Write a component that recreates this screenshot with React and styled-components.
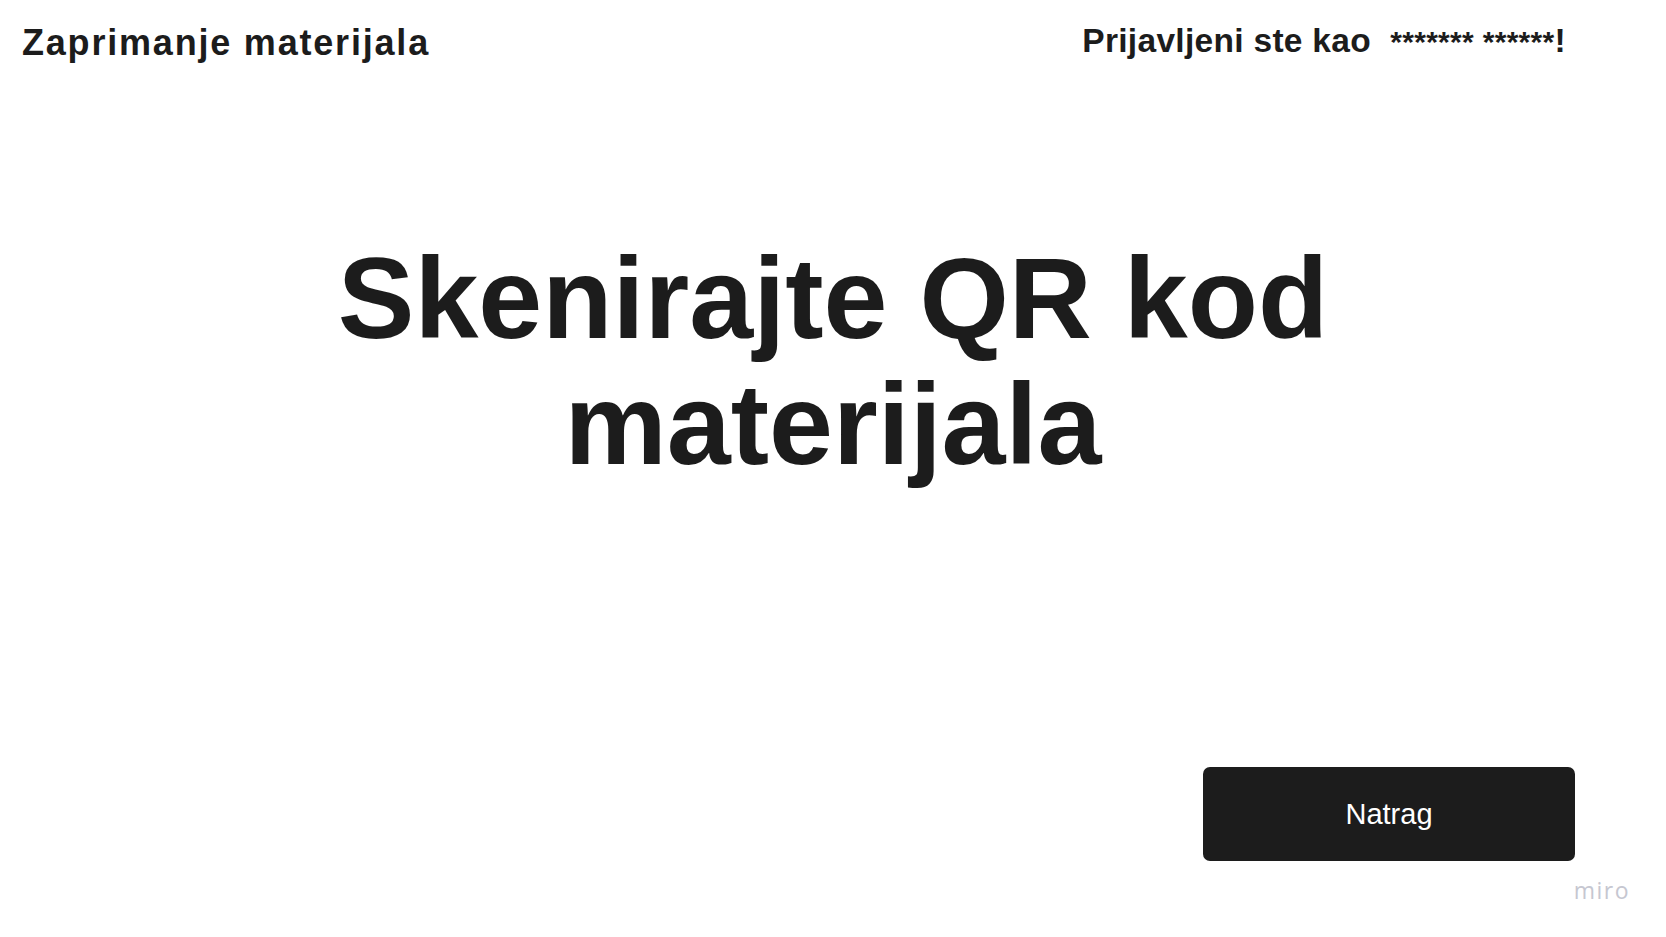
import React from 'react';
import styled, { createGlobalStyle } from 'styled-components';

const GlobalStyle = createGlobalStyle`
  html, body {
    margin: 0;
    padding: 0;
    background: #ffffff;
  }
  body {
    font-family: "Liberation Sans", Arial, sans-serif;
    color: #1c1c1c;
  }
`;

const Screen = styled.div`
  min-height: 100vh;
  display: flex;
  flex-direction: column;
  box-sizing: border-box;
`;

const Header = styled.header`
  display: flex;
  justify-content: space-between;
  align-items: flex-start;
  padding: 22px 100px 0 22px;
`;

const PageTitle = styled.h1`
  margin: 3px 0 0;
  font-size: 36px;
  line-height: 1;
  font-weight: 700;
  letter-spacing: 1.8px;
`;

const UserInfo = styled.div`
  margin-top: 2px;
  font-size: 33.5px;
  line-height: 1;
  font-weight: 700;
  letter-spacing: 0.3px;
  white-space: pre;
`;

const Masked = styled.span`
  font-size: 30px;
  letter-spacing: 0.3px;
`;

const Main = styled.main`
  margin-top: 174px;
  display: flex;
  justify-content: center;
`;

const Prompt = styled.h2`
  margin: 0;
  text-align: center;
  font-size: 115px;
  line-height: 126px;
  font-weight: 700;
  letter-spacing: 0;
`;

const Footer = styled.footer`
  margin-top: auto;
  display: flex;
  flex-direction: column;
  align-items: flex-end;
  padding: 0 36px 35px 0;
`;

const BackButton = styled.button`
  width: 372px;
  height: 94px;
  margin-right: 55px;
  border: none;
  border-radius: 7px;
  background: #1c1c1c;
  color: #ffffff;
  font-family: "Liberation Sans", Arial, sans-serif;
  font-size: 29px;
  cursor: pointer;
`;

const Watermark = styled.div`
  margin-top: 18px;
  font-family: "Open Sans", "Liberation Sans", sans-serif;
  font-size: 23px;
  line-height: 1;
  letter-spacing: 1.5px;
  color: #c6c7d1;
`;

export default function App() {
  return (
    <Screen>
      <GlobalStyle />
      <Header>
        <PageTitle>Zaprimanje materijala</PageTitle>
        <UserInfo>
          Prijavljeni ste kao  <Masked>******* ******</Masked>!
        </UserInfo>
      </Header>
      <Main>
        <Prompt>
          Skenirajte QR kod
          <br />
          materijala
        </Prompt>
      </Main>
      <Footer>
        <BackButton>Natrag</BackButton>
        <Watermark>miro</Watermark>
      </Footer>
    </Screen>
  );
}
